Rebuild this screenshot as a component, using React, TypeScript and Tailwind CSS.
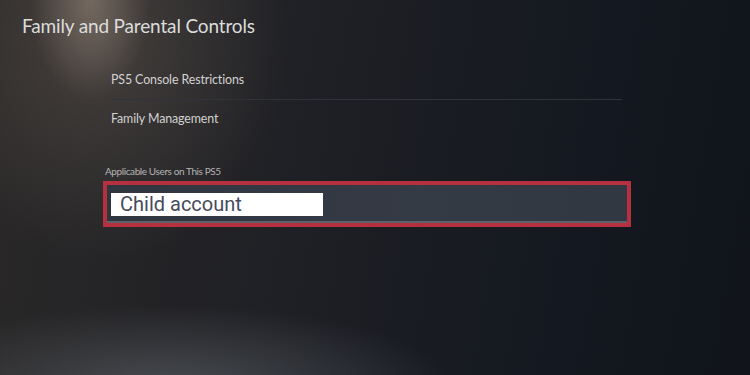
export default function App() {
  return (
    <main className="h-[375px] w-[750px] overflow-hidden bg-[radial-gradient(ellipse_60px_100px_at_90px_0px,rgba(150,135,122,0.6),transparent),radial-gradient(ellipse_190px_220px_at_100px_40px,rgba(100,90,82,0.5),transparent),radial-gradient(ellipse_280px_80px_at_170px_385px,rgba(95,100,106,0.6),transparent),linear-gradient(100deg,#2a2828_0%,#1f2025_40%,#141820_75%,#11141b_100%)] font-['Lato','Open_Sans',sans-serif] text-[#dcdcdc]">
      <h1 className="pl-[22px] pt-[14px] text-[19px] leading-[24px] font-normal tracking-[-0.15px]">
        Family and Parental Controls
      </h1>

      <div className="ml-[111px] mt-[23px] w-[511px] text-[12.4px] tracking-[-0.1px] text-[#d2d2d2]">
        <div className="flex h-[39px] items-center border-b border-[#30333a]">
          PS5 Console Restrictions
        </div>
        <div className="flex h-[39px] items-center">Family Management</div>
      </div>

      <div className="ml-[103px] mt-[25px] w-[528px]">
        <p className="pl-[2px] text-[10px] leading-[14px] text-[#b4b4b4] tracking-[-0.4px]">
          Applicable Users on This PS5
        </p>
        <div className="mt-[3px] h-[46px] border-4 border-[#b5313f]">
          <div className="flex h-full items-center bg-[linear-gradient(90deg,#30353e,#353b45_60%,#323842)] pl-[4px] shadow-[inset_0_-2px_0_#5c626c]">
            <div className="flex h-[23px] w-[212px] items-center bg-white pl-[9px] font-['Roboto',sans-serif] text-[20px] leading-none text-[#464b5c]">
              Child account
            </div>
          </div>
        </div>
      </div>
    </main>
  );
}
